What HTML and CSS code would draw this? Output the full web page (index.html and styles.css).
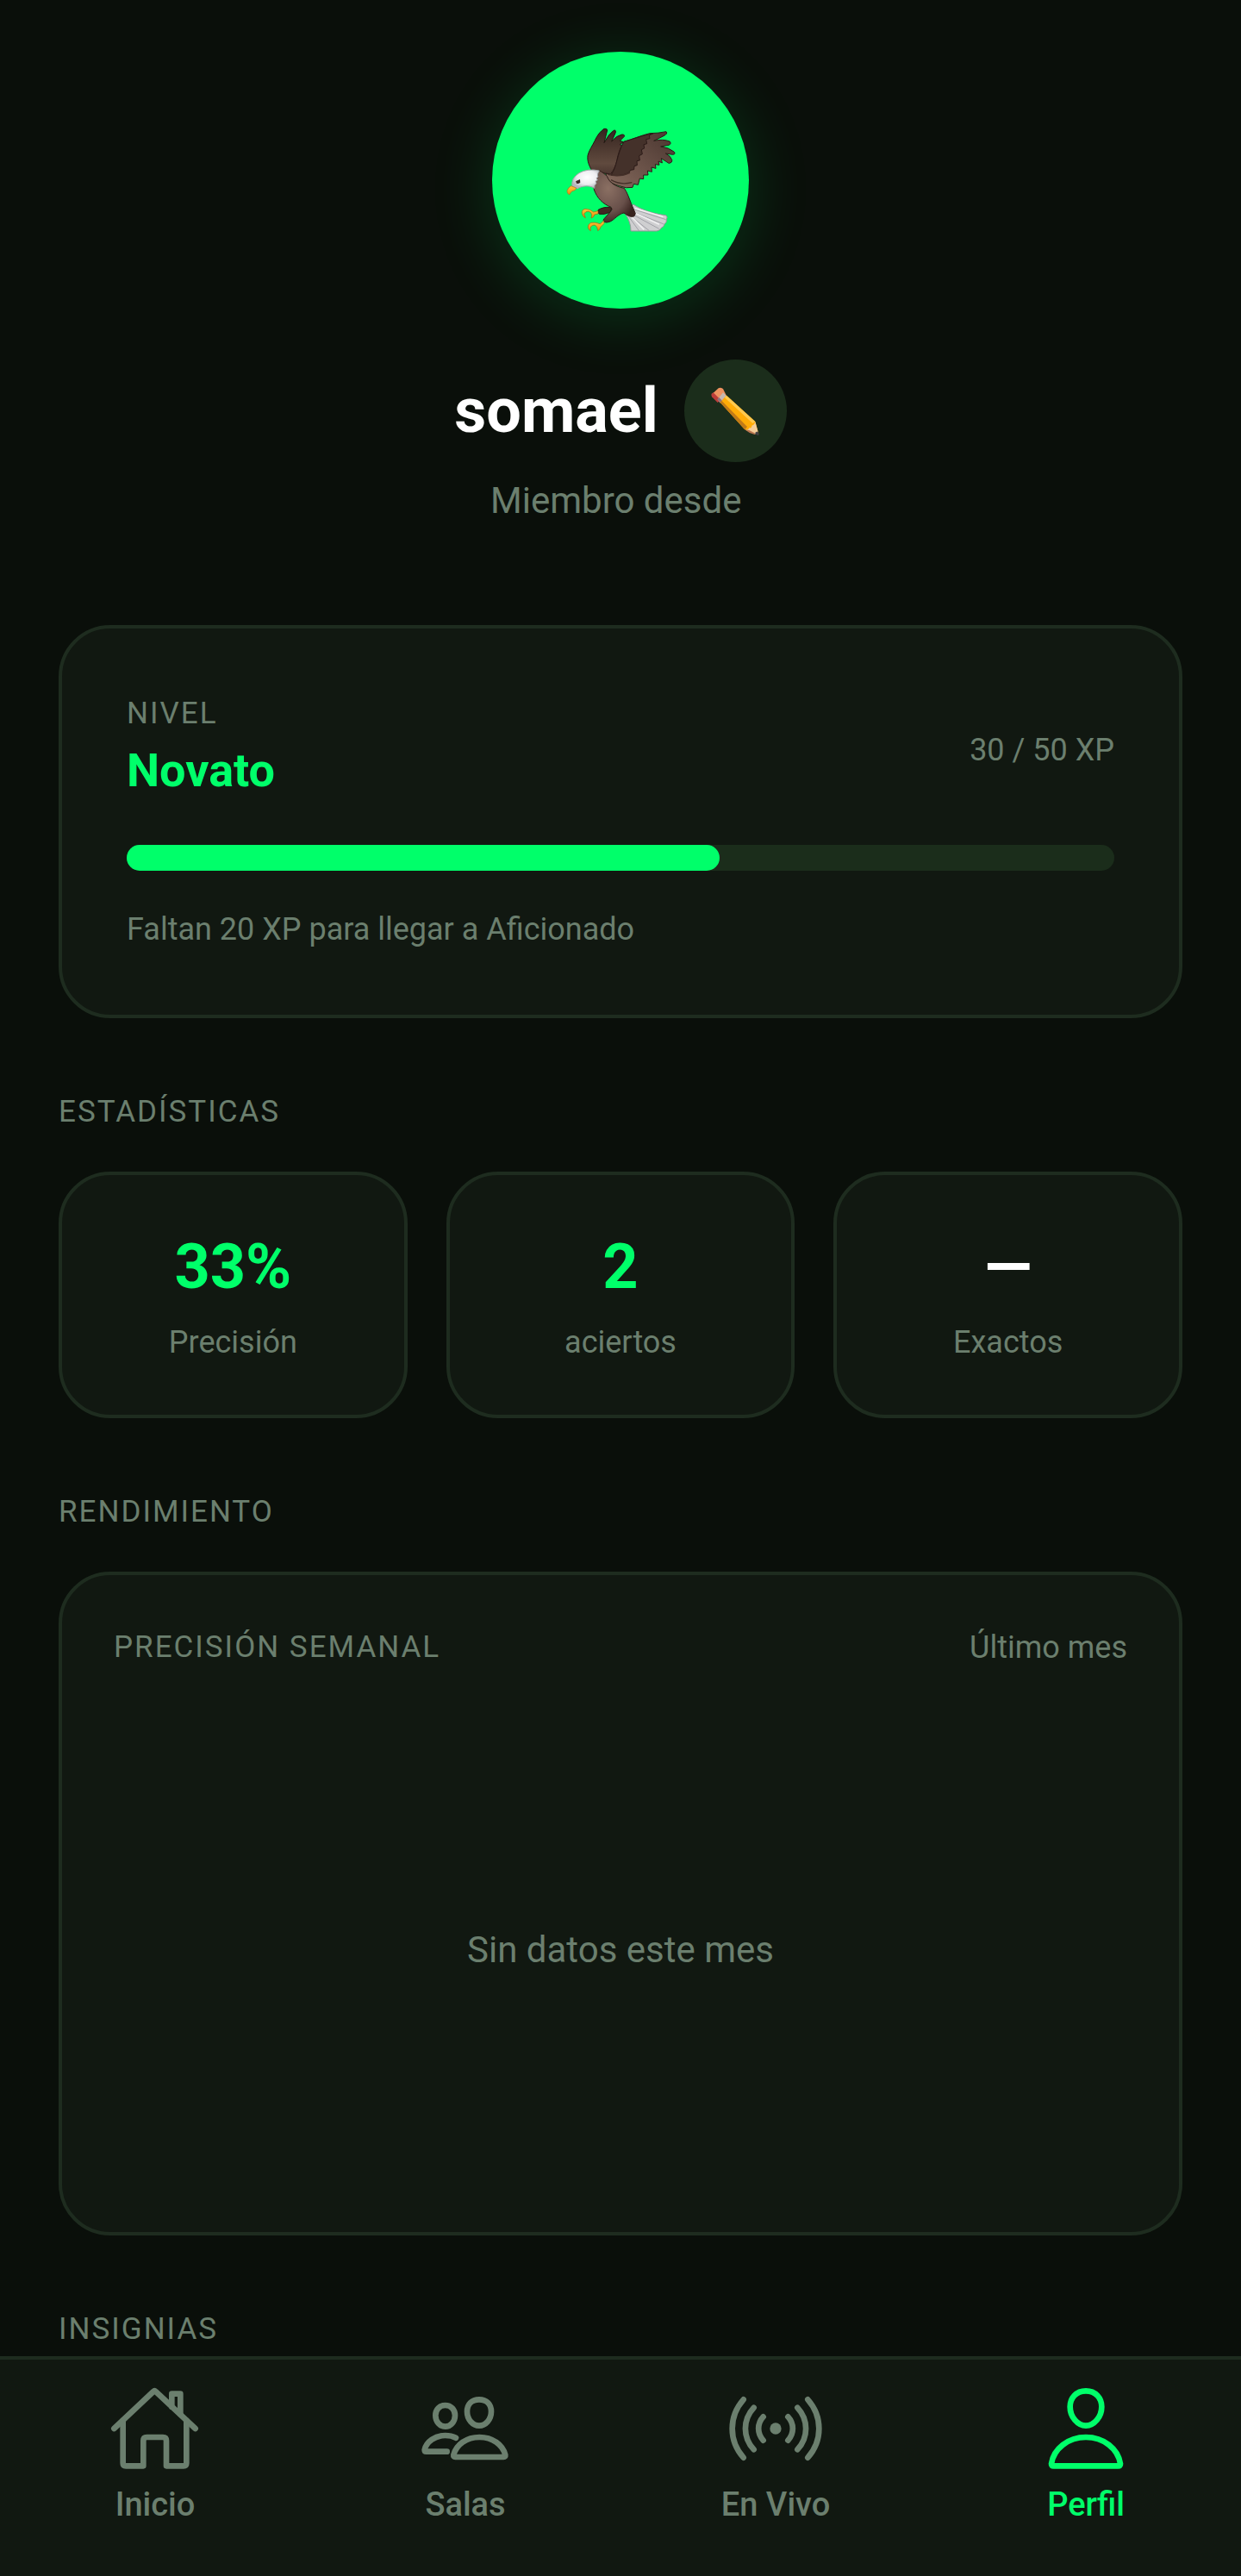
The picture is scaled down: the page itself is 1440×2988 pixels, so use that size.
FILE: index.html
```html
<!DOCTYPE html>
<html lang="es">
<head>
    <meta charset="UTF-8">
    <meta name="viewport" content="width=device-width, initial-scale=1.0">
    <title>Perfil</title>
    <link rel="stylesheet" href="styles.css">
</head>
<body>

    <main class="page">
        <header class="profile">
            <div class="avatar">
                <svg class="eagle" viewBox="0 -4 480 480" role="img" aria-label="Águila">
                    <defs>
                        <linearGradient id="wingBack" x1="0" y1="0" x2="0" y2="1">
                            <stop offset="0" stop-color="#35241f"/>
                            <stop offset="0.75" stop-color="#604a3e"/>
                            <stop offset="1" stop-color="#49352f"/>
                        </linearGradient>
                        <linearGradient id="wingFront" x1="1" y1="0" x2="0" y2="1">
                            <stop offset="0" stop-color="#49352f"/>
                            <stop offset="1" stop-color="#856a5d"/>
                        </linearGradient>
                        <radialGradient id="bodyFill" cx="0.35" cy="0.35" r="0.7">
                            <stop offset="0" stop-color="#8b7063"/>
                            <stop offset="0.65" stop-color="#68504a"/>
                            <stop offset="1" stop-color="#38231f"/>
                        </radialGradient>
                        <radialGradient id="headFill" cx="0.55" cy="0.4" r="0.6">
                            <stop offset="0" stop-color="#ffffff"/>
                            <stop offset="0.6" stop-color="#ededf0"/>
                            <stop offset="1" stop-color="#b5b5bd"/>
                        </radialGradient>
                        <linearGradient id="gold" x1="0" y1="0" x2="0" y2="1">
                            <stop offset="0" stop-color="#ffc83a"/>
                            <stop offset="1" stop-color="#e78c08"/>
                        </linearGradient>
                    </defs>
                    <!-- Cola -->
                    <path d="M284 320C318 342 360 354 398 358Q406 364 400 373Q402 382 393 389Q391 399 382 402Q377 412 366 413H276Q276 380 256 352Z" fill="#cfcfd1" stroke="#929698" stroke-width="3"/>
                    <path d="M282 336L398 373M278 344L391 389M276 352L374 405M272 358L340 412M268 362L305 413" stroke="#a2a2a8" stroke-width="3" fill="none"/>
                    <path d="M290 334L388 363M285 348L375 390M277 362L322 408" stroke="#efeff0" stroke-width="5" fill="none"/>
                    <!-- Ala trasera -->
                    <path d="M140 202C130 184 124 170 126 150C130 133 143 114 150 100C160 78 170 66 183 57Q194 55 194 62L183 106Q198 76 216 63Q225 60 223 70L209 101Q225 81 245 77Q256 77 253 84L238 99L250 103L238 112L248 116L239 126L245 132L236 141L225 196L210 218Z" fill="url(#wingBack)" stroke="#241311" stroke-width="3"/>
                    <!-- Ala delantera -->
                    <path d="M205 216C220 195 225 183 230 155C235 134 241 121 252 102C280 94 312 80 342 73Q372 73 399 67Q406 74 390 82L356 99Q388 92 411 101Q419 109 408 114L380 119Q408 122 426 137Q434 145 422 147L397 143Q414 151 419 165Q421 176 408 177L382 160L385 176L372 170L375 183L361 181L363 195L348 191L349 207L334 203L336 218L320 218L320 232L307 230L301 252L286 249L282 261Q260 266 236 256C205 248 188 232 190 212Z" fill="url(#wingFront)" stroke="#2b1a17" stroke-width="3"/>
                    <path d="M207 218C227 193 228 143 252 102C280 94 318 80 354 73L340 80L342 91L329 94L332 109L321 112L323 125L313 130L316 145L305 151L307 167L297 169L298 184L288 187L287 199L275 201L269 210C250 219 230 222 207 218Z" fill="#44312a" stroke="#2b1a17" stroke-width="3"/>
                    <path d="M196 216Q237 227 273 210M207 235Q238 254 280 244" fill="none" stroke="#443029" stroke-width="4"/>
                    <!-- Cuerpo y patas -->
                    <path d="M210 333C194 326 171 333 162 340Q159 351 167 354Q184 357 203 348Z" fill="#402923" stroke="#2a1714" stroke-width="3"/>
                    <path d="M162 201C177 207 185 215 193 222C202 247 226 259 253 264C264 280 271 301 278 319L292 352Q289 365 280 363Q270 364 252 350C231 354 220 373 204 380Q190 386 183 381Q177 374 184 369L206 345Q214 337 207 330C177 318 158 297 148 269Q140 239 162 201Z" fill="url(#bodyFill)" stroke="#2e1c18" stroke-width="3"/>
                    <!-- Cabeza -->
                    <path d="M166 203Q157 217 162 224L156 229L160 236L153 240L156 248L150 253L149 264C130 252 107 256 90 265L72 257Q67 229 96 211Q126 194 166 203Z" fill="url(#headFill)" stroke="#a2a7aa" stroke-width="3"/>
                    <path d="M84 240L99 233L100 244Q93 250 87 247Z" fill="#3a2928"/>
                    <!-- Pico y garras -->
                    <path d="M68 256L86 263Q84 273 72 274Q67 276 62 287Q53 281 54 273Q57 262 68 256Z" fill="url(#gold)" stroke="#b86b1f" stroke-width="2"/>
                    <path d="M162 343L146 347Q136 337 117 336Q104 339 106 352Q109 364 118 367L113 353L120 346Q129 342 137 349L140 357L138 368Q148 365 149 356L162 353Z" fill="url(#gold)" stroke="#9c6118" stroke-width="2"/>
                    <path d="M182 377L169 388Q152 381 137 384Q125 390 127 402Q130 409 136 412L135 400Q141 391 151 392Q160 397 161 412Q169 408 171 399L183 387Z" fill="url(#gold)" stroke="#9c6118" stroke-width="2"/>
                </svg>
            </div>
            <div class="name-row">
                <h1 class="name">somael</h1>
                <button class="edit" type="button" aria-label="Editar nombre">
                    <svg class="pencil" viewBox="0 0 180 180" aria-hidden="true">
                        <path d="M8 31L39 62L61 38L48 12Q38 5 32 10L11 29Z" fill="#ef9260"/>
                        <path d="M8 29L14 25L39 50L29 60L9 40Q6 34 8 29Z" fill="#bd3d3a"/>
                        <path d="M29 49L48 25L59 35L38 60Z" fill="#c7b8b0"/>
                        <path d="M28 49L34 42L45 53L39 61Z" fill="#8f7179"/>
                        <path d="M38 59L60 35L160 126L172 169L135 160L122 152Z" fill="#ffac08"/>
                        <path d="M38 59L43 53L132 144L124 154Z" fill="#c17a18"/>
                        <path d="M53 42L60 35L160 126L151 132Z" fill="#ffc94f"/>
                        <path d="M160 126L170 163L160 170L124 154Q136 158 139 148Q148 150 148 140Q158 138 160 126Z" fill="#f4cd99"/>
                        <path d="M124 154L139 156L162 168L158 171L140 165Z" fill="#b8744f"/>
                        <path d="M169 160L173 171Q172 175 167 173L159 169Q162 162 169 160Z" fill="#3e3d42"/>
                    </svg>
                </button>
            </div>
            <p class="member">Miembro desde&nbsp;</p>
        </header>

        <section class="card level">
            <div class="level-top">
                <div>
                    <p class="label">NIVEL</p>
                    <p class="level-name">Novato</p>
                </div>
                <p class="muted">30 / 50 XP</p>
            </div>
            <div class="bar">
                <div class="bar-fill" style="width: 60%"></div>
            </div>
            <p class="muted">Faltan 20 XP para llegar a Aficionado</p>
        </section>

        <section class="section">
            <h2 class="label">ESTADÍSTICAS</h2>
            <div class="stats">
                <div class="card stat">
                    <p class="stat-value">33%</p>
                    <p class="muted">Precisión</p>
                </div>
                <div class="card stat">
                    <p class="stat-value">2</p>
                    <p class="muted">aciertos</p>
                </div>
                <div class="card stat">
                    <p class="stat-value empty">—</p>
                    <p class="muted">Exactos</p>
                </div>
            </div>
        </section>

        <section class="section">
            <h2 class="label">RENDIMIENTO</h2>
            <div class="card chart">
                <div class="chart-top">
                    <h3 class="label">PRECISIÓN SEMANAL</h3>
                    <p class="muted">Último mes</p>
                </div>
                <div class="chart-empty">Sin datos este mes</div>
            </div>
        </section>

        <section class="section">
            <h2 class="label">INSIGNIAS</h2>
        </section>
    </main>

    <nav class="nav">
        <a class="nav-item" href="#inicio">
            <svg class="icon" viewBox="0 0 324 324" aria-hidden="true">
                <path d="M19 162L156 33Q160 29 164 33L302 162"/>
                <path d="M220 86V41H250V112"/>
                <path d="M50 134V282Q50 292 60 292H121V204Q121 192 133 192H189Q201 192 201 204V292H261Q271 292 271 282V134"/>
            </svg>
            <span>Inicio</span>
        </a>
        <a class="nav-item" href="#salas">
            <svg class="icon" viewBox="0 0 324 324" aria-hidden="true">
                <path d="M92 81C112 81 126 96 126 116C126 138 110 155 92 155C74 155 58 138 58 116C58 96 72 81 92 81Z"/>
                <path d="M210 61C236 61 252 78 252 103C252 131 232 152 210 152C188 152 168 131 168 103C168 78 184 61 210 61Z"/>
                <path d="M129 194C119 189 106 186 92 186C57 186 26 208 20 236Q20 242 25 242H98"/>
                <path d="M121 254C130 218 166 192 211 192C256 192 292 218 301 254Q302 261 295 261H127Q120 261 121 254Z"/>
            </svg>
            <span>Salas</span>
        </a>
        <a class="nav-item" href="#envivo">
            <svg class="icon" viewBox="0 0 324 324" aria-hidden="true">
                <circle class="dot" cx="162" cy="162" r="20"/>
                <path d="M119 121C97 145 97 179 119 203M205 121C227 145 227 179 205 203"/>
                <path d="M86 89C47 131 47 193 86 235M238 89C277 131 277 193 238 235"/>
                <path d="M50 61C-2 120 -2 204 50 263M274 61C326 120 326 204 274 263"/>
            </svg>
            <span>En Vivo</span>
        </a>
        <a class="nav-item active" href="#perfil">
            <svg class="icon" viewBox="0 0 324 324" aria-hidden="true">
                <path d="M162 31C196 31 217 56 217 86C217 122 190 152 162 152C134 152 107 122 107 86C107 56 128 31 162 31Z"/>
                <path d="M42 284C50 232 100 192 162 192C224 192 274 232 282 284Q282 292 274 292H50Q42 292 42 284Z"/>
            </svg>
            <span>Perfil</span>
        </a>
    </nav>

</body>
</html>
```
FILE: styles.css
```css
* {
    box-sizing: border-box;
}
body {
    margin: 0;
    background: #0a0f0a;
    color: #ffffff;
    font-family: Roboto, sans-serif;
    font-size: 36px;
    line-height: 48px;
}
h1, h2, h3, p {
    margin: 0;
    font-weight: 400;
}
.page {
    padding: 60px 68px 262px;
}

/* Cabecera del perfil */
.profile {
    display: flex;
    flex-direction: column;
    align-items: center;
    margin-bottom: 114px;
}
.avatar {
    display: flex;
    align-items: center;
    justify-content: center;
    width: 298px;
    height: 298px;
    border-radius: 50%;
    background: #00ff6a;
    box-shadow: 0 10px 75px rgba(0, 255, 106, 0.16);
}
.eagle {
    width: 160px;
    height: 160px;
}
.name-row {
    display: flex;
    align-items: center;
    gap: 30px;
    margin-top: 59px;
}
.name {
    font-size: 72px;
    line-height: 84px;
    font-weight: 700;
}
.edit {
    display: flex;
    align-items: center;
    justify-content: center;
    width: 119px;
    height: 119px;
    padding: 0;
    border: none;
    border-radius: 50%;
    background: #1b2d1b;
    cursor: pointer;
}
.pencil {
    width: 60px;
    height: 60px;
}
.member {
    margin-top: 15px;
    color: #6b7f6e;
    font-size: 42px;
    line-height: 60px;
}

/* Tarjetas */
.card {
    border: 4px solid #1e2c1f;
    border-radius: 60px;
    background: #111811;
}
.label {
    color: #6b7f6e;
    font-size: 35px;
    letter-spacing: 2px;
}
.muted {
    color: #6b7f6e;
}

/* Nivel */
.level {
    display: flex;
    flex-direction: column;
    gap: 44px;
    padding: 75px;
}
.level-top {
    display: flex;
    align-items: center;
    justify-content: space-between;
}
.level-name {
    color: #00ff6a;
    font-size: 54px;
    line-height: 84px;
    font-weight: 700;
}
.bar {
    height: 30px;
    border-radius: 15px;
    background: #1b2d1b;
}
.bar-fill {
    height: 100%;
    border-radius: 15px;
    background: #00ff6a;
}

.section {
    display: flex;
    flex-direction: column;
    gap: 45px;
    margin-top: 85px;
}

/* Estadísticas */
.stats {
    display: grid;
    grid-template-columns: repeat(3, 1fr);
    gap: 45px;
}
.stat {
    display: flex;
    flex-direction: column;
    gap: 16px;
    padding: 60px 0;
    text-align: center;
}
.stat-value {
    color: #00ff6a;
    font-size: 72px;
    line-height: 94px;
    font-weight: 700;
}
.stat-value.empty {
    color: #ffffff;
}

/* Rendimiento */
.chart {
    display: flex;
    flex-direction: column;
    gap: 60px;
    padding: 60px;
}
.chart-top {
    display: flex;
    justify-content: space-between;
}
.chart-empty {
    display: flex;
    align-items: center;
    justify-content: center;
    height: 534px;
    color: #6b7f6e;
    font-size: 42px;
}

/* Barra inferior */
.nav {
    position: fixed;
    left: 0;
    right: 0;
    bottom: 0;
    display: grid;
    grid-template-columns: repeat(4, 1fr);
    padding: 26px 0 61px;
    border-top: 4px solid #1e2c1f;
    background: #111811;
}
.nav-item {
    display: flex;
    flex-direction: column;
    align-items: center;
    gap: 12px;
    color: #6b7f6e;
    font-size: 38px;
    line-height: 44px;
    font-weight: 500;
    text-decoration: none;
}
.nav-item.active {
    color: #00ff6a;
}
.icon {
    width: 108px;
    height: 108px;
    fill: none;
    stroke: currentColor;
    stroke-width: 20;
    stroke-linecap: round;
    stroke-linejoin: round;
}
.icon .dot {
    fill: currentColor;
    stroke: none;
}
```
